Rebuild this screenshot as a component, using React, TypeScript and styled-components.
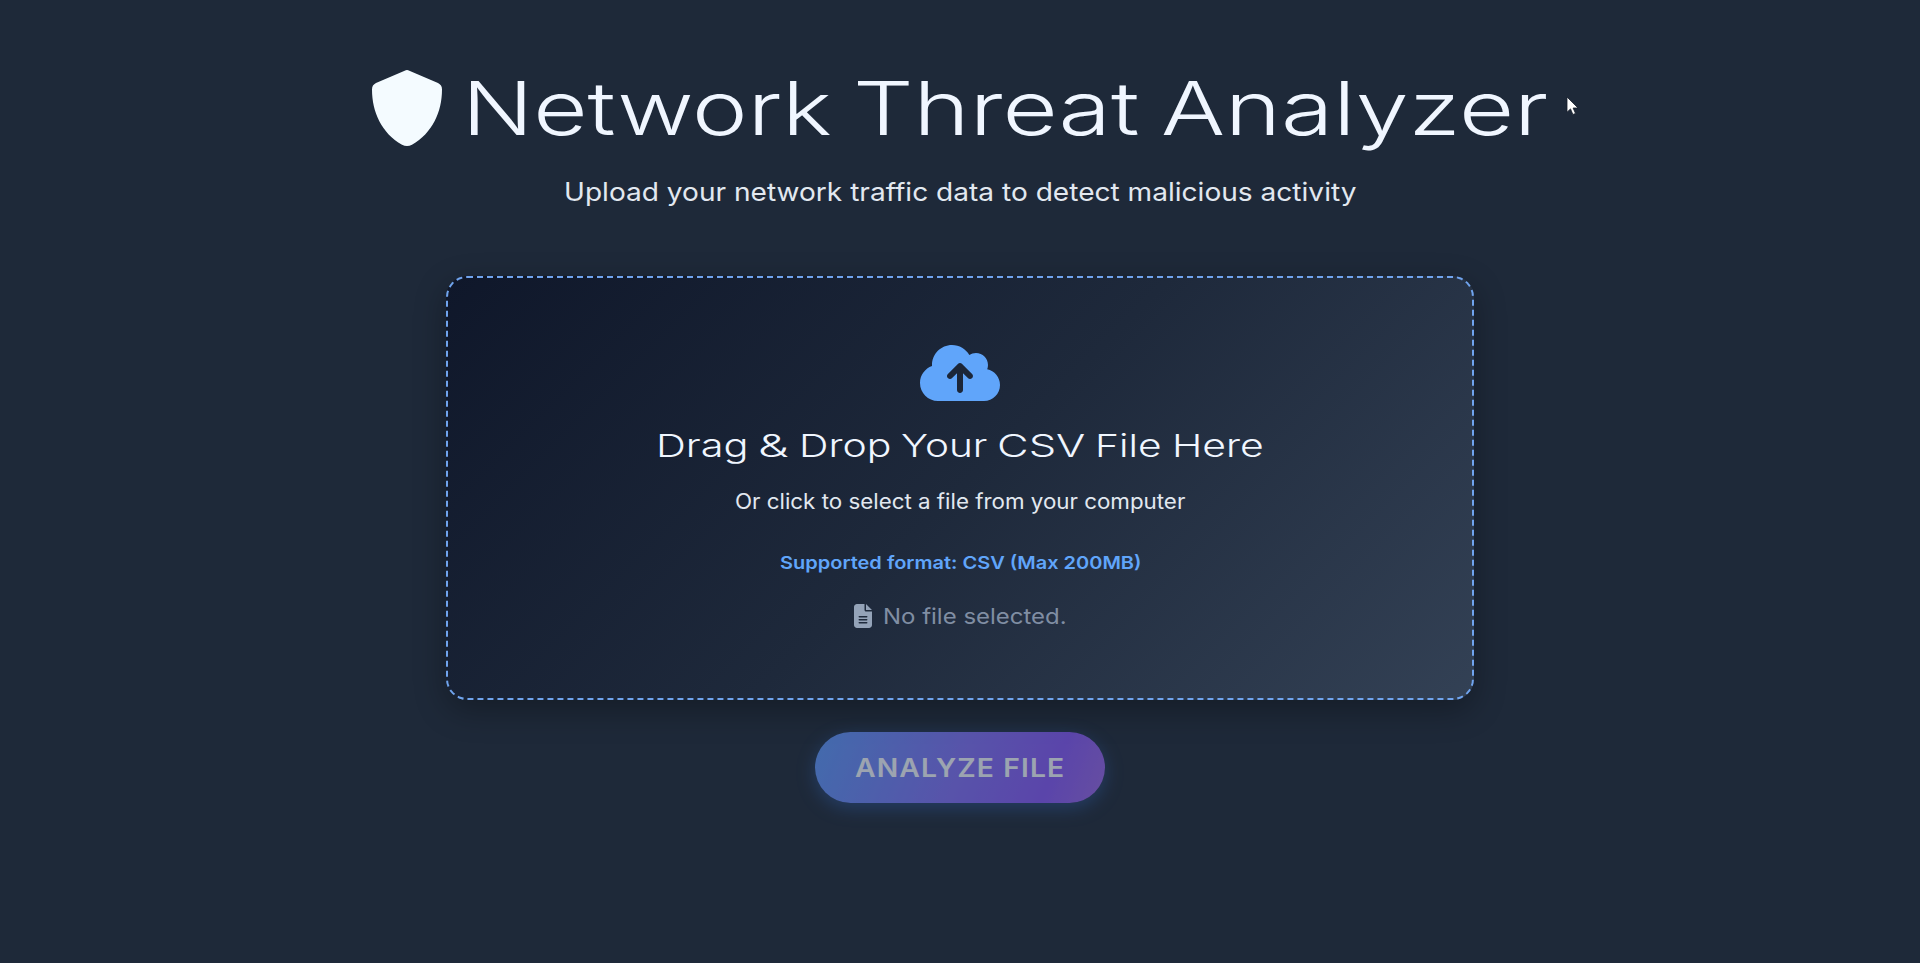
import React, { useLayoutEffect, useRef, useState } from "react";
import styled, { createGlobalStyle } from "styled-components";
import { FaCloudArrowUp, FaFileLines } from "react-icons/fa6";

const GlobalStyle = createGlobalStyle`
  * { box-sizing: border-box; }
  body {
    margin: 0;
    background: #1e2939;
    color: #f0f6ff;
    font-family: Inter, "Open Sans", sans-serif;
    overflow: hidden;
  }
`;

const Page = styled.main`
  height: 963px;
  padding-top: 63px;
  display: flex;
  flex-direction: column;
  align-items: center;
`;

const Title = styled.h1`
  height: 90px;
  margin: 0;
  display: flex;
  align-items: center;
  font-size: 74px;
  line-height: 90px;
  font-weight: 350;
`;

const Shield = styled.svg`
  width: 70px;
  height: 76px;
  margin: 0 19.5px 1px 0;
  fill: #f4fbff;
`;

const Words = styled.span<{ $gap: number }>`
  display: flex;
  gap: ${(p) => p.$gap}px;
`;

const Slot = styled.span<{ $width: number }>`
  display: block;
  width: ${(p) => p.$width}px;
  text-align: left;
  white-space: nowrap;
`;

const Stretched = styled.span`
  display: inline-block;
  transform-origin: left center;
`;

const Subtitle = styled.p`
  margin: 21px 0 0;
  font-size: 25.6px;
  line-height: 36px;
  color: #e2e8f0;
`;

const DropZone = styled.section`
  width: 1028px;
  height: 424px;
  margin-top: 66px;
  padding-top: 63px;
  display: flex;
  flex-direction: column;
  align-items: center;
  border: 2px dashed #70a4ee;
  border-radius: 21px;
  background: linear-gradient(135deg, #0f172a 0%, #1e293b 50%, #334155 100%);
  background-origin: border-box;
  box-shadow: 0 10px 32px rgba(0, 0, 0, 0.3);
`;

const CloudIcon = styled(FaCloudArrowUp)`
  width: 80px;
  height: 64px;
  color: #60a5fa;
`;

const DropHeading = styled.h2`
  margin: 20px 0 0;
  font-size: 31.6px;
  line-height: 42px;
  font-weight: 350;
`;

const Hint = styled.p`
  margin: 20px 0 0;
  font-size: 20.8px;
  line-height: 30px;
  color: #e2e8f0;
`;

const Format = styled.p`
  margin: 31px 0 0;
  font-size: 17.9px;
  line-height: 30px;
  font-weight: 600;
  color: #60a5fa;
`;

const FileStatus = styled.p`
  margin: 23px 0 0;
  display: flex;
  align-items: center;
  gap: 11px;
  font-size: 21.5px;
  line-height: 30px;
  color: #808ea3;
`;

const FileIcon = styled(FaFileLines)`
  width: 18px;
  height: 24px;
  color: #94a3b8;
`;

const AnalyzeButton = styled.button`
  width: 290px;
  height: 71px;
  margin-top: 32px;
  padding: 0 0 1px;
  display: flex;
  align-items: center;
  justify-content: center;
  border: 0;
  border-radius: 36px;
  background: linear-gradient(112deg, #5b98fa, #7f70f6 50%, #8358f6 80%, #9868e6);
  box-shadow: 0 5px 18px rgba(59, 130, 246, 0.4);
  color: #f0f6ff;
  font: 600 26px Inter, sans-serif;
  letter-spacing: 1px;
  opacity: 0.6;
`;

const Pointer = styled.svg`
  position: absolute;
  left: 1566px;
  top: 96px;
  width: 14px;
  height: 20px;
`;

/* Sets a run of text to a fixed width by widening its letters. */
function Fit({ text, width }: { text: string; width: number }) {
  const ref = useRef<HTMLSpanElement>(null);
  const [scale, setScale] = useState(1);
  useLayoutEffect(() => {
    if (ref.current) setScale(width / ref.current.offsetWidth);
  }, [text, width]);
  return (
    <Slot $width={width}>
      <Stretched ref={ref} style={{ transform: `scaleX(${scale})` }}>
        {text}
      </Stretched>
    </Slot>
  );
}

const titleWords: [string, number][] = [
  ["Network", 370],
  ["Threat", 286],
  ["Analyzer", 387],
];

const headingWords: [string, number][] = [
  ["Drag", 92],
  ["&", 31],
  ["Drop", 92],
  ["Your", 86],
  ["CSV", 88],
  ["File", 67],
  ["Here", 92],
];

export default function App() {
  return (
    <>
      <GlobalStyle />
      <Page>
        <Title>
          <Shield viewBox="0 0 210 226" preserveAspectRatio="none">
            <path d="M98 2Q105-2 112 2L198 39Q210 45 210 58C210 125 181 188 120 222Q105 230 90 222C29 188 0 125 0 58Q0 45 12 39Z" />
          </Shield>
          <Words $gap={21.5}>
            {titleWords.map(([text, width]) => (
              <Fit key={text} text={text} width={width} />
            ))}
          </Words>
        </Title>
        <Subtitle>
          <Fit
            text="Upload your network traffic data to detect malicious activity"
            width={792}
          />
        </Subtitle>
        <DropZone>
          <CloudIcon />
          <DropHeading>
            <Words $gap={10}>
              {headingWords.map(([text, width]) => (
                <Fit key={text} text={text} width={width} />
              ))}
            </Words>
          </DropHeading>
          <Hint>
            <Fit text="Or click to select a file from your computer" width={450} />
          </Hint>
          <Format>
            <Fit text="Supported format: CSV (Max 200MB)" width={361} />
          </Format>
          <FileStatus>
            <FileIcon />
            <Fit text="No file selected." width={184} />
          </FileStatus>
        </DropZone>
        <AnalyzeButton disabled>
          <Fit text="ANALYZE FILE" width={210} />
        </AnalyzeButton>
      </Page>
      <Pointer viewBox="0 0 14 20">
        <path
          d="M1 1v15.2l3.5-3.3 2.4 5.6 2.6-1.1-2.4-5.4h4.9z"
          fill="#fff"
          stroke="#18202c"
          strokeWidth="0.8"
        />
      </Pointer>
    </>
  );
}
